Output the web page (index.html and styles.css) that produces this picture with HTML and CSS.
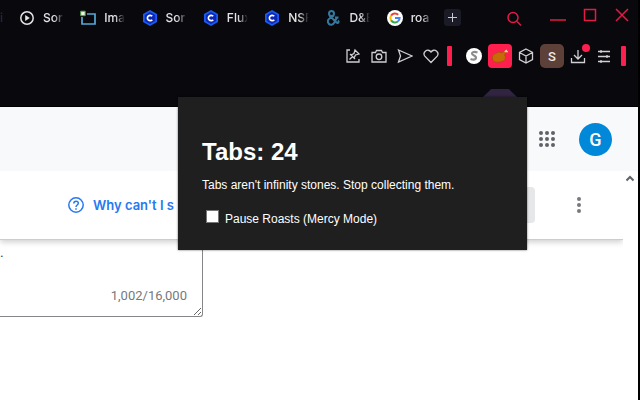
FILE: index.html
```html
<!DOCTYPE html>
<html lang="en">
<head>
<meta charset="utf-8">
<title>Browser</title>
<link rel="stylesheet" href="styles.css">
</head>
<body>
<svg class="defs" width="0" height="0" aria-hidden="true">
  <symbol id="hex" viewBox="0 0 16 16">
    <path d="M8 0l7 4v8l-7 4-7-4V4z" fill="#1a5cf0"/>
    <path d="M8 2l5.200 3v6L8 14l-5.200-3V5z" fill="#0b27b4"/>
    <path d="M10.200 6.300A2.700 2.700 0 1 0 10.200 9.700" fill="none" stroke="#fff" stroke-width="1.700"/>
  </symbol>
</svg>
<div class="browser">
  <header class="chrome">
    <div class="tabbar">
      <span class="tab-rest">i</span>
      <nav class="tabs">
        <a class="tab" href="#"><svg viewBox="0 0 16 16"><circle cx="8" cy="8" r="6.200" fill="none" stroke="#e4e4e4" stroke-width="1.500"/><path d="M6.200 5v6l4.600-3z" fill="#e4e4e4"/></svg><span>Sor</span></a>
        <a class="tab" href="#"><svg viewBox="0 0 16 16"><path d="M7 4h8v10H2V7" fill="none" stroke="#56a9d8" stroke-width="1.700"/><path d="M.7 1.200h4.500v4.500H.7z" fill="#e8f5e0" stroke="#4e9b47"/></svg><span>Ima</span></a>
        <a class="tab" href="#"><svg><use href="#hex"/></svg><span>Sor</span></a>
        <a class="tab" href="#"><svg><use href="#hex"/></svg><span>Flux</span></a>
        <a class="tab" href="#"><svg><use href="#hex"/></svg><span>NSF</span></a>
        <a class="tab" href="#"><svg viewBox="0 0 16 16" fill="none" stroke="#35799f" stroke-width="2"><circle cx="6.500" cy="3.500" r="2.500"/><path d="M4.500 5.500l7 7c1.500 1.500 3-.5 1.500-2M9 5.500l-4.500 3a3.300 3.300 0 1 0 4.500 4.500l3-5.500M10 7.500h3.500"/></svg><span>D&amp;E</span></a>
        <a class="tab" href="#"><svg viewBox="0 0 16 16"><circle cx="8" cy="8" r="8" fill="#fff"/><g fill="none" stroke-width="2"><path d="M4.100 5.600A4.600 4.600 0 0 1 11.200 4.700" stroke="#ea4335"/><path d="M4.100 5.600a4.600 4.600 0 0 0 0 4.800" stroke="#fbbc05"/><path d="M4.100 10.400a4.600 4.600 0 0 0 7 .9" stroke="#34a853"/><path d="M11.100 11.300A4.600 4.600 0 0 0 12.600 8H8" stroke="#4285f4"/></g></svg><span>roa</span></a>
      </nav>
      <button class="new-tab" aria-label="New tab"><svg viewBox="0 0 17 17"><path d="M8.500 4v9M4 8.500h9" stroke="#c9c9d2"/></svg></button>
      <div class="window-tools">
        <button aria-label="Search"><svg viewBox="0 0 18 20"><circle cx="8" cy="9.500" r="5" /><path d="M12 13.500l4 4"/></svg></button>
        <button aria-label="Minimize"><svg viewBox="0 0 18 20"><path d="M1 12h16"/></svg></button>
        <button aria-label="Maximize"><svg viewBox="0 0 18 20"><path d="M3.500 1.500h11v11h-11z"/></svg></button>
        <button aria-label="Close"><svg viewBox="0 0 18 20"><path d="M3 1l12 12M15 1l-12 12"/></svg></button>
      </div>
    </div>
    <div class="toolbar">
      <div class="tools">
        <button aria-label="Pin"><svg viewBox="0 0 16 16"><path d="M5 2H2v12h12v-3M4.500 11.500l3-3M5 6l5 5M6 7l3-1.500L10 2l4 4-3.500 1L9 10"/></svg></button>
        <button aria-label="Snapshot"><svg viewBox="0 0 16 16"><path d="M1 4.500h3.500l1-2h5l1 2H15V14H1z"/><circle cx="8" cy="8.800" r="2.800"/></svg></button>
        <button aria-label="Send"><svg viewBox="0 0 16 16"><path d="M1.500 2l13.500 6-13.500 6 2-6z"/></svg></button>
        <button aria-label="Favorite"><svg viewBox="0 0 16 16"><path d="M8 14.500L1.800 8.200C-.8 4.500 4.500-.5 8 4c3.500-4.500 8.800.5 6.200 4.200z"/></svg></button>
      </div>
      <i class="marker"></i>
      <div class="extensions">
        <button class="ext" aria-label="Extension S"><svg viewBox="0 0 16 16"><circle cx="8" cy="8" r="8" fill="#fff" stroke="none"/><path d="M11.500 4.500C8 3 6 4.200 6 5.600 6 7.800 10.500 7.500 10 10c-.4 2-3.300 2-5.500 1" stroke="#8d8d8d" stroke-width="2.200"/></svg></button>
        <button class="ext roast" aria-label="Tab roaster"><svg viewBox="0 0 18 18"><path d="M1.500 11C1 8 3 6.500 5 6.500 7 4.500 9.500 5 11 6l2.500-2 1.500 1.500-1.500 2.500c2 2.500.5 6-2.500 6.500-2 1-7 1-8 0s-1.500-2-1.500-3.500z" fill="#c76a08" stroke="#a8520a" stroke-width=".8"/><path d="M13.800 5l2-2M15.300 4.500l1.500.3" stroke="#f5d0a0" stroke-width="1.500"/></svg></button>
        <button class="ext" aria-label="Extensions"><svg viewBox="0 0 16 16"><path d="M8 1l6.500 3.500v7L8 15l-6.500-3.500v-7zM1.500 4.500L8 8l6.500-3.500M8 8v7"/></svg></button>
        <button class="ext profile">S</button>
        <button class="ext download" aria-label="Downloads"><svg viewBox="0 0 16 16"><path d="M8 2v9M4 7l4 4 4-4M1.500 10v4.500h13V10"/></svg></button>
        <button class="ext" aria-label="Settings"><svg viewBox="0 0 16 16"><path d="M2 3.500h12M2 8.500h12M2 13.500h12M5 2v3M11 7v3M5 12v3"/></svg></button>
      </div>
      <i class="marker"></i>
    </div>
    <i class="side-tab"></i>
  </header>

  <main class="page">
    <div class="appbar">
      <button aria-label="Apps"><svg class="apps" viewBox="0 0 18 18"><g fill="#5f6368"><circle cx="3" cy="3" r="2"/><circle cx="9" cy="3" r="2"/><circle cx="15" cy="3" r="2"/><circle cx="3" cy="9" r="2"/><circle cx="9" cy="9" r="2"/><circle cx="15" cy="9" r="2"/><circle cx="3" cy="15" r="2"/><circle cx="9" cy="15" r="2"/><circle cx="15" cy="15" r="2"/></g></svg></button>
      <button class="avatar">G</button>
    </div>
    <div class="scroller">
      <div class="content">
        <div class="actions">
          <a class="help" href="#"><svg viewBox="0 0 16 16"><circle cx="8" cy="8" r="7.200"/><path d="M5.800 6.500c0-3 4.500-3 4.500-.3C10.300 8 8 8 8 10M8 11.200v1.500"/></svg>Why can't I s</a>
          <button class="submit" aria-label="Submit"></button>
          <button class="more" aria-label="More options"><svg viewBox="0 0 6 18"><g fill="#77797c"><circle cx="3" cy="3" r="2"/><circle cx="3" cy="9" r="2"/><circle cx="3" cy="15" r="2"/></g></svg></button>
        </div>
        <div class="field">
          <textarea aria-label="Description">.</textarea>
          <span class="counter">1,002/16,000</span>
        </div>
      </div>
      <div class="scrollbar"><svg viewBox="0 0 10 8"><path d="M1.500 6.500L5 3l3.500 3.500" fill="none" stroke="#606366" stroke-width="2"/></svg></div>
    </div>
  </main>

  <section class="popup">
    <h1>Tabs: 24</h1>
    <p>Tabs aren't infinity stones. Stop collecting them.</p>
    <label><input type="checkbox">Pause Roasts (Mercy Mode)</label>
  </section>
</div>
</body>
</html>
```
FILE: styles.css
```css
* { box-sizing: border-box; }
body { margin: 0; background: #000; font-family: "Liberation Sans", Arial, sans-serif; }
button { padding: 0; border: 0; background: none; font: inherit; color: inherit; display: flex; align-items: center; justify-content: center; }
a { color: inherit; text-decoration: none; }
svg { display: block; flex: none; }
.defs { position: absolute; }
.browser { position: relative; min-height: 100vh; padding-right: 2px; display: flex; flex-direction: column; }

.chrome { position: relative; padding-bottom: 29px; background: #08080d; border-bottom: 1px solid #000; }
.tabbar { display: flex; align-items: center; height: 35px; font: 12px Inter, sans-serif; color: #e4e4e6; }
.tab-rest { width: 19px; color: #303036; }
.tabs { display: flex; width: 429px; }
.tab { flex: 1 1 0; display: flex; align-items: center; gap: 8px; min-width: 0; }
.tab svg { width: 16px; height: 16px; }
.tab span { width: 22px; overflow: hidden; white-space: nowrap; font-weight: 500; mask-image: linear-gradient(90deg, #000 50%, transparent 95%); }
.new-tab { width: 17px; height: 17px; margin-left: -4px; border-radius: 3px; background: #1b1a27; }
.new-tab svg { width: 17px; height: 17px; }
.window-tools { display: flex; gap: 14px; margin-left: auto; padding-right: 7px; }
.window-tools svg { width: 18px; height: 20px; fill: none; stroke: #e31b45; stroke-width: 1.500; }
.window-tools button:first-child { margin-right: 12px; }

.toolbar { display: flex; align-items: center; justify-content: flex-end; height: 42px; padding-right: 12px; }
.toolbar svg { width: 16px; height: 16px; fill: none; stroke: #d0d0d4; stroke-width: 1.300; }
.tools { display: flex; gap: 10px; margin-right: 8px; }
.marker { width: 5px; height: 20px; border-radius: 1px; background: #ff1f4f; }
.extensions { display: flex; align-items: center; gap: 2px; margin: 0 5px 0 10px; }
.ext { position: relative; width: 24px; height: 24px; }
.toolbar .roast { border-radius: 4px; background: #ff1f4f; }
.toolbar .roast svg { width: 18px; height: 18px; }
.profile { border-radius: 5px; background: #5d4037; color: #ececec; font: 500 13px Roboto, sans-serif; }
.download::after { content: ""; position: absolute; top: 0; right: 0; width: 8px; height: 8px; border-radius: 50%; background: #ff1f4f; }
.side-tab { position: absolute; right: 121px; bottom: 9px; width: 34px; height: 8px; background: #302440; clip-path: polygon(24% 0, 76% 0, 100% 100%, 0 100%); }

.page { flex: 1; display: flex; flex-direction: column; background: #fff; }
.appbar { display: flex; align-items: center; justify-content: flex-end; gap: 23px; height: 64px; padding-right: 26px; background: #f8f9fb; }
.apps { width: 18px; height: 18px; }
.avatar { width: 33px; height: 33px; border-radius: 50%; background: #0288d8; color: #fff; font: 500 18px Roboto, sans-serif; }
.scroller { flex: 1; display: flex; }
.content { flex: 1; }
.scrollbar { width: 15px; padding: 3px 3px 0 2px; }
.scrollbar svg { width: 10px; height: 8px; }
.actions { position: relative; z-index: 1; display: flex; align-items: center; height: 69px; padding-left: 68px; background: #fff; border-bottom: 1px solid #ccc; box-shadow: 0 2px 6px rgba(0, 0, 0, .2); clip-path: inset(0 0 -10px 0); }
.help { display: flex; align-items: center; gap: 9px; color: #2878f0; font: 600 13px Inter, sans-serif; }
.help svg { width: 16px; height: 16px; fill: none; stroke: #2878f0; stroke-width: 1.500; }
.submit { margin-left: auto; width: 80px; height: 36px; border-radius: 4px; background: #e6e7e8; }
.more { margin: 0 41px; }
.more svg { width: 6px; height: 18px; }
.field { position: relative; width: 203px; }
textarea { display: block; width: 100%; height: 77px; padding: 2px 0; border: 1px solid #85868a; border-width: 0 1px 1px 0; border-radius: 0 0 3px 0; background: #fff; color: #444; font: 14px/20px Roboto, sans-serif; resize: both; outline: 0; }
.counter { position: absolute; right: 16px; bottom: 13px; color: #77787c; font: 400 13px/16px Roboto, sans-serif; }

.popup { position: absolute; z-index: 2; top: 97px; right: 113px; width: 349px; height: 153px; padding: 41px 24px 0; background: #1f1f1f; color: #fff; box-shadow: 0 0 2px rgba(0, 0, 0, .6); font-size: 12px; }
.popup h1 { margin: 0 0 11px; font-size: 24px; line-height: 28px; }
.popup p { margin: 0 0 17px; line-height: 16px; }
.popup label { display: flex; align-items: center; gap: 6px; line-height: 16px; }
.popup input { appearance: none; width: 13px; height: 13px; margin: 0 0 4px 4px; background: #fff; border: 1px solid #767676; }
```
